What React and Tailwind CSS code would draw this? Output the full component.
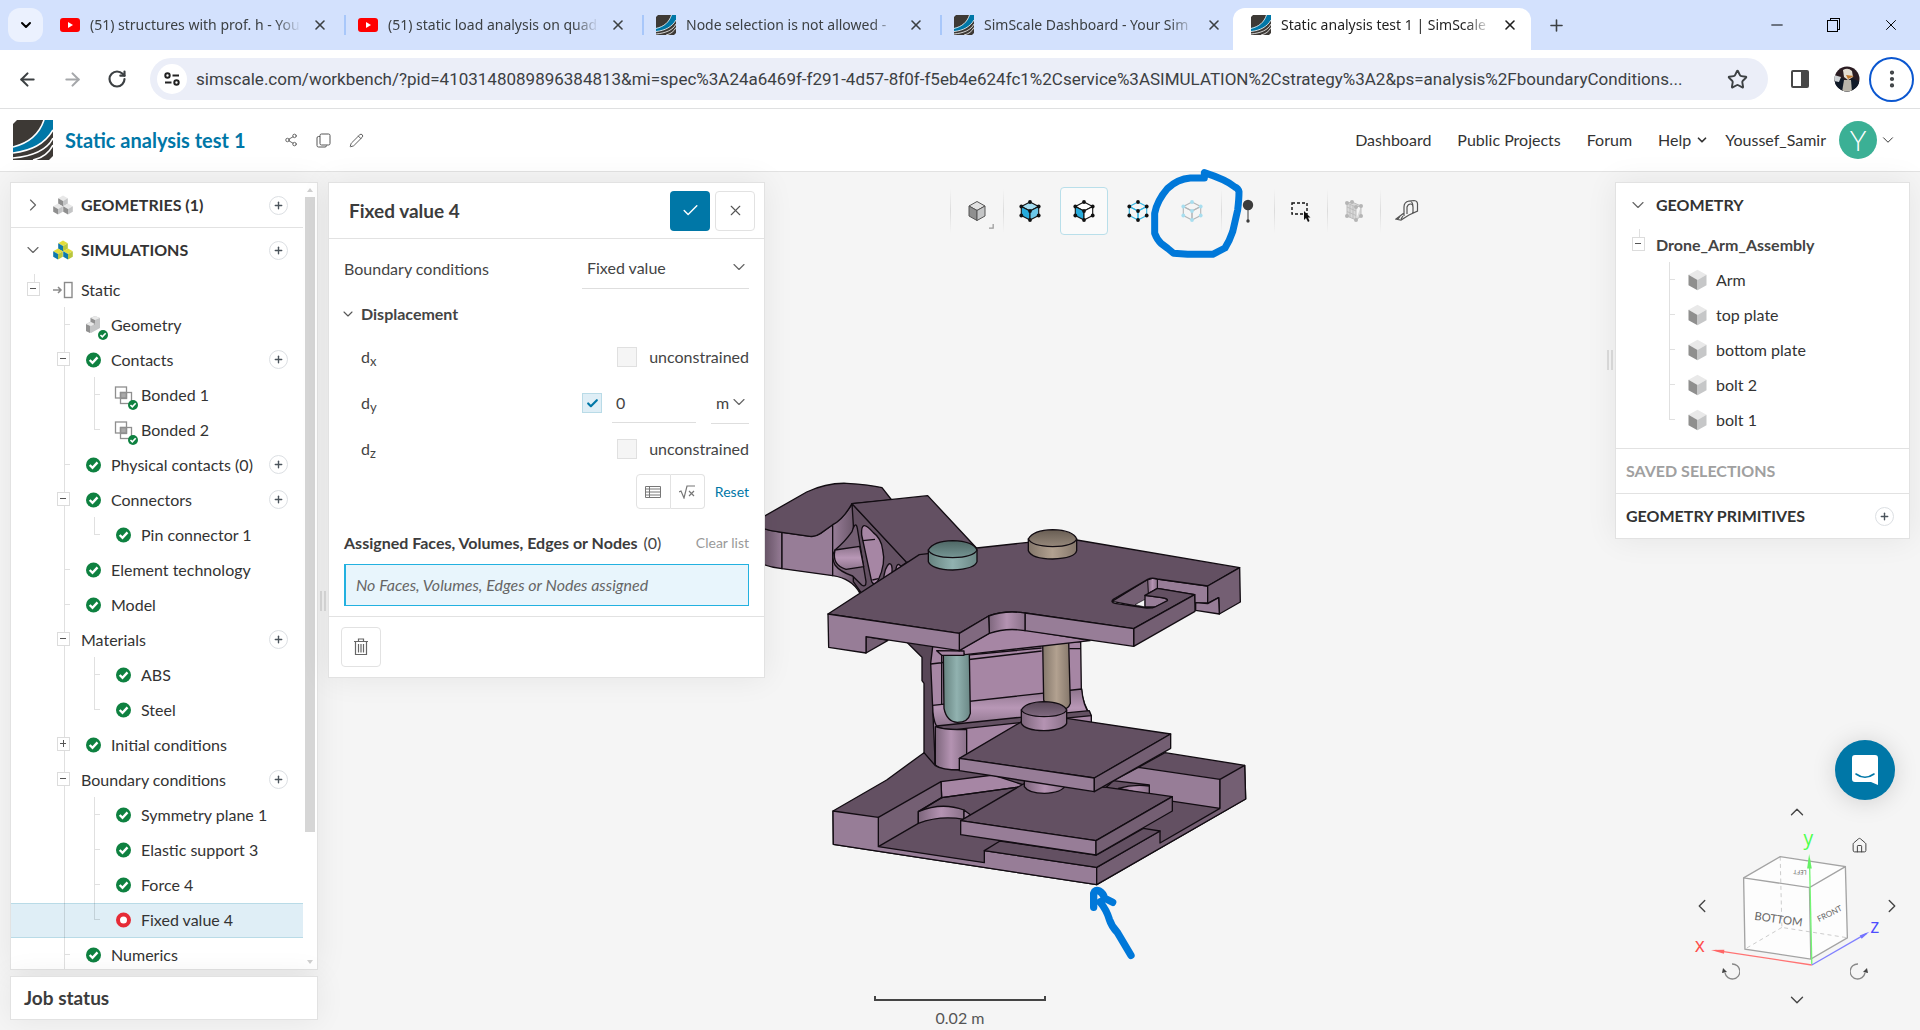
import React, { useState } from 'react';
import {
  ArrowLeft,
  ArrowRight,
  Check,
  ChevronDown,
  ChevronLeft,
  ChevronRight,
  ChevronUp,
  EllipsisVertical,
  House,
  Minus,
  Pencil,
  Plus,
  RotateCw,
  Share2,
  Star,
  X,
} from 'lucide-react';

const TABS = [
  { icon: 'youtube', title: '(51) structures with prof. h - You' },
  { icon: 'youtube', title: '(51) static load analysis on quad' },
  { icon: 'simscale', title: 'Node selection is not allowed -' },
  { icon: 'simscale', title: 'SimScale Dashboard - Your Sim' },
  { icon: 'simscale', title: 'Static analysis test 1 | SimScale', active: true },
];

const URL =
  'simscale.com/workbench/?pid=4103148089896384813&mi=spec%3A24a6469f-f291-4d57-8f0f-f5eb4e624fc1%2Cservice%3ASIMULATION%2Cstrategy%3A2&ps=analysis%2FboundaryConditions...';

// guides: one entry per 30px column in front of the item
const TREE = [
  { label: 'Static', guides: ['root'], icon: 'static' },
  { label: 'Geometry', guides: ['none', 'tee'], icon: 'geometry' },
  { label: 'Contacts', guides: ['none', 'minus'], icon: 'ok', add: true },
  { label: 'Bonded 1', guides: ['none', 'line', 'tee'], icon: 'bonded' },
  { label: 'Bonded 2', guides: ['none', 'line', 'end'], icon: 'bonded' },
  { label: 'Physical contacts (0)', guides: ['none', 'tee'], icon: 'ok', add: true },
  { label: 'Connectors', guides: ['none', 'minus'], icon: 'ok', add: true },
  { label: 'Pin connector 1', guides: ['none', 'line', 'end'], icon: 'ok' },
  { label: 'Element technology', guides: ['none', 'tee'], icon: 'ok' },
  { label: 'Model', guides: ['none', 'tee'], icon: 'ok' },
  { label: 'Materials', guides: ['none', 'minus'], add: true },
  { label: 'ABS', guides: ['none', 'line', 'tee'], icon: 'ok' },
  { label: 'Steel', guides: ['none', 'line', 'end'], icon: 'ok' },
  { label: 'Initial conditions', guides: ['none', 'plus'], icon: 'ok' },
  { label: 'Boundary conditions', guides: ['none', 'minus'], add: true },
  { label: 'Symmetry plane 1', guides: ['none', 'line', 'tee'], icon: 'ok' },
  { label: 'Elastic support 3', guides: ['none', 'line', 'tee'], icon: 'ok' },
  { label: 'Force 4', guides: ['none', 'line', 'tee'], icon: 'ok' },
  { label: 'Fixed value 4', guides: ['none', 'line', 'end'], icon: 'open', selected: true },
  { label: 'Numerics', guides: ['none', 'tee'], icon: 'ok' },
];

const PARTS = ['Arm', 'top plate', 'bottom plate', 'bolt 2', 'bolt 1'];

function SimScaleLogo({ className }) {
  return (
    <svg viewBox="0 0 40 40" className={className} aria-hidden="true">
      <path d="M4 0 H40 V36 L36 40 H0 V4 Z" fill="#3d3935" />
      <path d="M31 0 H40 V10 C32 24 18 31 0 33 V26 C16 23 26 15 31 0 Z" fill="#0077a7" />
      <path d="M31 0 C26 15 16 23 0 27" fill="none" stroke="#fff" strokeWidth="1.6" />
      <path d="M40 10 C32 24 18 31 0 33" fill="none" stroke="#fff" strokeWidth="1.6" />
      <path d="M40 18 C34 30 20 36 0 38" fill="none" stroke="#fff" strokeWidth="1.6" />
      <path d="M40 25 C36 33 29 38 20 40" fill="none" stroke="#fff" strokeWidth="1.6" />
    </svg>
  );
}

function YouTubeIcon() {
  return (
    <svg viewBox="0 0 20 20" className="h-5 w-5 shrink-0" aria-hidden="true">
      <rect y="3" width="20" height="14" rx="3" fill="#f00" />
      <path d="M8 7 L13 10 L8 13 Z" fill="#fff" />
    </svg>
  );
}

function Cube({ x, y, r, top, left, right }) {
  const h = r * 1.14;
  return (
    <g transform={`translate(${x} ${y})`}>
      <path d={`M0 ${-h} L${r} ${-h / 2} L0 0 L${-r} ${-h / 2} Z`} fill={top} />
      <path d={`M${-r} ${-h / 2} L0 0 V${h} L${-r} ${h / 2} Z`} fill={left} />
      <path d={`M${r} ${-h / 2} L0 0 V${h} L${r} ${h / 2} Z`} fill={right} />
    </g>
  );
}

function CubeStack({ top, left, right }) {
  return (
    <svg viewBox="0 0 20 20" className="h-5 w-5" aria-hidden="true">
      <Cube x={10} y={6} r={4.8} top={top} left={left} right={right} />
      <Cube x={5} y={14} r={4.8} top={top} left={left} right={right} />
      <Cube x={15} y={14} r={4.8} top={top} left={left} right={right} />
    </svg>
  );
}

function CheckBadge({ x, y, r }) {
  return (
    <g transform={`translate(${x} ${y}) scale(${r / 7.5})`}>
      <circle r="7.5" fill="#0e8140" stroke="none" />
      <path d="M-3.8 0 L-1 2.8 L4 -2.6" fill="none" stroke="#fff" strokeWidth="2.4" />
    </g>
  );
}

function ItemIcon({ type }) {
  return (
    <svg viewBox="0 0 30 30" className="h-[30px] w-[30px] shrink-0 overflow-visible" aria-hidden="true">
      {type === 'ok' && <CheckBadge x={15.5} y={15} r={7.5} />}
      {type === 'open' && <circle cx="15.5" cy="15" r="5.5" fill="#fff" stroke="#e62b36" strokeWidth="4" />}
      {type === 'static' && (
        <g fill="none" stroke="#8a8a8a">
          <rect x="16.5" y="7.5" width="7.5" height="15" strokeWidth="1.4" />
          <path d="M5 15 H13 M10 12 L13 15 L10 18" strokeWidth="1.5" />
        </g>
      )}
      {type === 'geometry' && (
        <g>
          <path d="M8 14 L12 12 V8 L17 6 L22 8 V18 L13 23 L8 21 Z" fill="#c4c5c6" />
          <path d="M8 14 L12 16 V23 L8 21 Z M13 8 L17 10 V15 L13 13 Z" fill="#919191" />
          <path d="M8 14 L13 12 L17 14 L13 16 Z M13 8 L17 6 L22 8 L17 10 Z" fill="#e9e9e9" />
          <CheckBadge x={25} y={25} r={5} />
        </g>
      )}
      {type === 'bonded' && (
        <g fill="none" stroke="#8f8f8f" strokeWidth="1.3">
          <rect x="12.5" y="12.5" width="6" height="6" fill="#a9a9a9" />
          <rect x="7.5" y="7" width="11" height="11" />
          <rect x="12.5" y="12.5" width="11" height="11" />
          <CheckBadge x={25} y={25} r={5} />
        </g>
      )}
    </svg>
  );
}

function Guide({ type }) {
  const boxed = type === 'minus' || type === 'plus' || type === 'root';
  return (
    <svg viewBox="0 0 30 35" className="h-[35px] w-[30px] shrink-0" aria-hidden="true">
      <g fill="none" stroke="#000" strokeOpacity="0.12" shapeRendering="crispEdges">
        {(type === 'line' || type === 'tee' || type === 'minus' || type === 'plus') && <path d="M16.5 0 V35" />}
        {type === 'end' && <path d="M16.5 0 V18" />}
        {type === 'root' && <path d="M16.5 2 V12" />}
        {(type === 'tee' || type === 'end') && <path d="M17 17.5 H22" />}
      </g>
      {boxed && (
        <g shapeRendering="crispEdges">
          <rect x="9.5" y="10.5" width="12" height="13" fill="#fff" stroke="#dcdcdc" />
          <path d="M12 16.5 H18" stroke="#555" />
          {type === 'plus' && <path d="M15.5 13 V20" stroke="#555" />}
        </g>
      )}
    </svg>
  );
}

function AddButton({ label }) {
  return (
    <button
      aria-label={`Add ${label}`}
      className="ml-auto flex h-[19px] w-[19px] shrink-0 items-center justify-center rounded-full border border-[#dcdfe3] bg-white text-[#4b545c]"
    >
      <Plus size={11} strokeWidth={3} />
    </button>
  );
}

function TreeRow({ item }) {
  return (
    <li
      className={`flex h-[35px] items-center pr-[15px] pb-[2px] pl-[7px] ${
        item.selected ? 'bg-[#dfeef6] shadow-[inset_0_1px_0_#b9dbe7,inset_0_-1px_0_#b9dbe7]' : ''
      }`}
    >
      {item.guides.map((g, i) => (
        <Guide key={i} type={g} />
      ))}
      {item.icon && <ItemIcon type={item.icon} />}
      <span className="pl-[3px]">{item.label}</span>
      {item.add && <AddButton label={item.label} />}
    </li>
  );
}

function SectionHeader({ title, icon, open }) {
  const Chevron = open ? ChevronDown : ChevronRight;
  return (
    <div className="flex h-11 items-center pr-[15px] pl-[7px]">
      <button aria-label={title} className="flex w-[30px] justify-center text-[#666]">
        <Chevron size={20} strokeWidth={1.4} />
      </button>
      <span className="flex w-[30px] justify-center">{icon}</span>
      <h2 className="pl-[3px] font-bold">{title}</h2>
      <AddButton label={title} />
    </div>
  );
}

function BrowserTabs() {
  return (
    <div className="flex h-[50px] bg-[#d3e1fd] pl-2 text-[#3c4043]">
      <button aria-label="Search tabs" className="mt-2 mr-2 flex h-[34px] w-[35px] shrink-0 items-center justify-center rounded-xl bg-[#ebf1fe] text-black">
        <ChevronDown size={16} strokeWidth={3} />
      </button>
      <div className="flex min-w-0">
        {TABS.map((tab, i) => (
          <div
            key={tab.title}
            className={`mt-2 flex h-[42px] w-[298px] min-w-0 items-center pb-2 ${
              tab.active ? 'ml-[-10px] rounded-t-xl bg-white pr-[13px] pl-[18px] text-[#1f1f1f]' : 'pr-4 pl-[9px]'
            }`}
          >
            {tab.icon === 'youtube' ? <YouTubeIcon /> : <SimScaleLogo className="h-5 w-5 shrink-0" />}
            <span className="ml-[10px] flex-1 whitespace-nowrap [mask-image:linear-gradient(to_right,#000_88%,transparent)]">
              {tab.title}
            </span>
            <button aria-label={`Close ${tab.title}`} className="ml-[11px] shrink-0">
              <X size={16} strokeWidth={2.4} />
            </button>
            {i < 3 && <span className="ml-4 -mr-[13px] h-5 w-[2px] shrink-0 bg-[#a8c7fa]" />}
            {i === 3 && <span className="w-[5px] shrink-0" />}
          </div>
        ))}
        <button aria-label="New tab" className="ml-4 shrink-0">
          <Plus size={19} strokeWidth={2} />
        </button>
      </div>
      <div className="ml-auto flex items-center gap-10 pr-5 text-black">
        <button aria-label="Minimize">
          <Minus size={18} strokeWidth={1.3} />
        </button>
        <button aria-label="Restore">
          <svg viewBox="0 0 16 16" className="h-4 w-4" fill="none" stroke="currentColor" shapeRendering="crispEdges">
            <path d="M1.5 3.5 H11.5 V14.5 H1.5 Z M4 3 V1.5 H13.5 V12.5 H12" />
          </svg>
        </button>
        <button aria-label="Close window">
          <X size={18} strokeWidth={1.3} />
        </button>
      </div>
    </div>
  );
}

function AddressBar() {
  return (
    <div className="flex h-[59px] items-center border-b border-[#dfe0e1] bg-white px-[17px] pr-[6px] text-[#3c4043]">
      <button aria-label="Back">
        <ArrowLeft size={21} strokeWidth={2.4} />
      </button>
      <button aria-label="Forward" className="ml-6 text-[#a5a7aa]">
        <ArrowRight size={21} strokeWidth={2.4} />
      </button>
      <button aria-label="Reload" className="ml-6">
        <RotateCw size={20} strokeWidth={2.6} />
      </button>
      <div className="ml-[23px] flex h-[42px] min-w-0 flex-1 items-center rounded-full bg-[#ebeef8] pl-[7px] pr-5">
        <button aria-label="Site settings" className="flex h-[30px] w-[30px] shrink-0 items-center justify-center rounded-full bg-white">
          <svg viewBox="0 0 16 16" className="h-4 w-4" fill="none" stroke="#222" strokeWidth="2">
            <circle cx="3.5" cy="4.5" r="2.2" />
            <path d="M8.5 4.5 H15 M1 11.5 H7.5" />
            <circle cx="12.5" cy="11.5" r="2.2" />
          </svg>
        </button>
        <input
          aria-label="Address"
          defaultValue={URL}
          className="ml-[9px] min-w-0 flex-1 bg-transparent font-['Roboto',sans-serif] text-[17px] outline-none"
        />
        <button aria-label="Bookmark" className="shrink-0">
          <Star size={21} strokeWidth={2.2} />
        </button>
      </div>
      <button aria-label="Side panel" className="ml-[22px]">
        <svg viewBox="0 0 20 20" className="h-5 w-5">
          <rect x="1" y="1" width="18" height="18" rx="2" fill="#474747" />
          <rect x="3" y="3" width="8" height="14" fill="#fff" />
        </svg>
      </button>
      <button aria-label="Profile" className="ml-6">
        <svg viewBox="0 0 26 26" className="h-[26px] w-[26px]">
          <clipPath id="face">
            <circle cx="13" cy="13" r="12.5" />
          </clipPath>
          <g clipPath="url(#face)">
            <rect width="26" height="26" fill="#2b1c22" />
            <path d="M0 14 L9 12 L13 20 L18 12 L26 16 V26 H0 Z" fill="#101a28" />
            <path d="M0 9 L7 11 L5 16 L0 15 Z" fill="#cfd3d6" />
            <path d="M9 4 Q14 1 18 5 L19 11 L14 14 L10 11 Z" fill="#e4ddd2" />
            <path d="M12 9 L20 10 L14 13 Z" fill="#c0782e" />
            <path d="M10 14 L17 14 L18 26 L8 26 Z" fill="#b9b5aa" />
          </g>
        </svg>
      </button>
      <button aria-label="Menu" className="ml-[9px] flex h-[45px] w-[45px] items-center justify-center rounded-full border-2 border-[#0b57d0]">
        <EllipsisVertical size={22} strokeWidth={2.6} />
      </button>
    </div>
  );
}

function AppHeader() {
  return (
    <header className="flex h-[63px] items-center border-b border-[#e2e2e2] bg-white pl-[13px] pr-[23px] text-[#333]">
      <SimScaleLogo className="h-10 w-10" />
      <h1 className="ml-3 text-xl font-bold text-[#0077a7]">Static analysis test 1</h1>
      <div className="ml-[38px] flex items-center gap-[18px] text-[#555]">
        <button aria-label="Share">
          <Share2 size={14} strokeWidth={1.5} />
        </button>
        <button aria-label="Duplicate">
          <svg viewBox="0 0 15 15" className="h-[15px] w-[15px]" fill="none" stroke="currentColor">
            <rect x="4" y="1" width="10" height="11" rx="1.5" />
            <path d="M4 3.5 H2.5 Q1 3.5 1 5 V12.5 Q1 14 2.5 14 H9 Q10.5 14 10.5 12.5" />
          </svg>
        </button>
        <button aria-label="Rename">
          <Pencil size={15} strokeWidth={1.5} />
        </button>
      </div>
      <nav className="ml-auto flex items-center gap-[26px]">
        <a href="#dashboard">Dashboard</a>
        <a href="#projects">Public Projects</a>
        <a href="#forum">Forum</a>
        <button className="flex items-center gap-1">
          Help <ChevronDown size={14} strokeWidth={3} />
        </button>
      </nav>
      <button className="ml-4 flex items-center">
        Youssef_Samir
        <span className="ml-[13px] flex h-[38px] w-[38px] items-center justify-center rounded-full bg-[#3bb095] text-[28px] font-light text-white">
          Y
        </span>
        <ChevronDown size={18} strokeWidth={1.3} className="ml-[2px]" />
      </button>
    </header>
  );
}

function SimulationTree() {
  return (
    <section className="flex min-h-0 flex-1 overflow-hidden border border-[#e2e2e2] bg-white shadow-[0_0_30px_rgba(0,0,0,0.07)]">
      <div className="min-w-0 flex-1">
        <div className="border-b border-[#e2e2e2]">
          <SectionHeader title="GEOMETRIES (1)" icon={<CubeStack top="#e8e8e8" left="#8f8f8f" right="#c4c5c6" />} />
        </div>
        <SectionHeader title="SIMULATIONS" open icon={<CubeStack top="#e3dd3c" left="#0f79ab" right="#b9c63c" />} />
        <ul className="pt-px">
          {TREE.map((item) => (
            <TreeRow key={item.label} item={item} />
          ))}
        </ul>
      </div>
      <div className="flex w-[14px] flex-col items-center" aria-hidden="true">
        <svg viewBox="0 0 10 14" className="h-[14px] w-[10px] shrink-0">
          <path d="M2 9 L5 5 L8 9 Z" fill="#cfcfcf" />
        </svg>
        <div className="h-[635px] w-[10px] bg-[#d6d6d6]" />
        <svg viewBox="0 0 10 14" className="mt-auto h-[14px] w-[10px] shrink-0">
          <path d="M2 5 L5 9 L8 5 Z" fill="#cfcfcf" />
        </svg>
      </div>
    </section>
  );
}

function TickBox({ checked, onChange, label, children }) {
  return (
    <label className="flex items-center gap-3">
      <span className="grid">
        <input
          type="checkbox"
          aria-label={label}
          checked={checked}
          onChange={onChange}
          className="col-start-1 row-start-1 h-5 w-5 appearance-none border border-[#e0e0e0] bg-[#f5f5f5] checked:border-[#b9dbe7] checked:bg-[#dfeef6]"
        />
        {checked && (
          <Check size={13} strokeWidth={4} className="pointer-events-none col-start-1 row-start-1 self-center justify-self-center text-[#0077a7]" />
        )}
      </span>
      {children}
    </label>
  );
}

function Axis({ name }) {
  return (
    <span className="pl-[17px]">
      d<sub className="text-[13px]">{name}</sub>
    </span>
  );
}

function Dropdown({ label, value, className }) {
  return (
    <div className={`relative border-b border-[#dedede] ${className}`}>
      <select aria-label={label} className="h-10 w-full appearance-none bg-transparent pl-[5px] outline-none">
        <option>{value}</option>
      </select>
      <ChevronDown size={20} strokeWidth={1.4} className="pointer-events-none absolute top-[9px] right-0 text-[#666]" />
    </div>
  );
}

function BoundaryForm() {
  const [fixed, setFixed] = useState({ x: false, y: true, z: false });
  const toggle = (axis) => setFixed({ ...fixed, [axis]: !fixed[axis] });

  return (
    <form className="w-[437px] shrink-0 self-start border border-[#e2e2e2] bg-white text-[#444] shadow-[0_0_30px_rgba(0,0,0,0.07)]">
      <div className="flex h-14 items-center gap-[5px] border-b border-[#e2e2e2] pl-5 pr-[9px]">
        <h2 className="flex-1 text-[19px] font-bold text-[#3c3c3c]">Fixed value 4</h2>
        <button type="button" aria-label="Apply" className="flex h-10 w-10 items-center justify-center rounded bg-[#0077a7] text-white">
          <Check size={19} strokeWidth={1.8} />
        </button>
        <button type="button" aria-label="Cancel" className="flex h-10 w-10 items-center justify-center rounded border border-[#e2e2e2] text-[#555]">
          <X size={17} strokeWidth={1.6} />
        </button>
      </div>

      <div className="px-[15px] pt-[9px] pb-[10px]">
        <div className="flex items-center justify-between">
          <span>Boundary conditions</span>
          <Dropdown label="Boundary conditions" value="Fixed value" className="w-[167px]" />
        </div>

        <h3 className="mt-1 flex h-[41px] items-center gap-[5px] font-bold">
          <ChevronDown size={16} strokeWidth={1.6} className="-ml-1 text-[#555]" />
          Displacement
        </h3>

        <div className="flex h-[46px] items-center justify-between">
          <Axis name="x" />
          <TickBox checked={fixed.x} onChange={() => toggle('x')}>
            unconstrained
          </TickBox>
        </div>
        <div className="flex h-[46px] items-center">
          <Axis name="y" />
          <div className="ml-auto flex items-center gap-[10px]">
            <TickBox checked={fixed.y} onChange={() => toggle('y')} label="Constrain y" />
            <input
              aria-label="Displacement y"
              defaultValue="0"
              className="h-10 w-[84px] border-b border-[#dedede] pl-1 outline-none"
            />
          </div>
          <Dropdown label="Unit" value="m" className="ml-[15px] w-[38px]" />
        </div>
        <div className="flex h-[46px] items-center justify-between">
          <Axis name="z" />
          <TickBox checked={fixed.z} onChange={() => toggle('z')}>
            unconstrained
          </TickBox>
        </div>

        <div className="mt-[2px] flex items-center justify-end text-sm">
          <button type="button" aria-label="Table input" className="flex h-[35px] w-[35px] items-center justify-center rounded-l border border-[#e2e2e2]">
            <svg viewBox="0 0 16 12" className="h-3 w-4" fill="none" stroke="#777">
              <path d="M0.5 0.5 H15.5 V11.5 H0.5 Z M0.5 3 H15.5 M0.5 6 H15.5 M0.5 9 H15.5 M4.5 0.5 V11.5" />
            </svg>
          </button>
          <button type="button" aria-label="Formula input" className="flex h-[35px] w-[34px] items-center justify-center rounded-r border border-l-0 border-[#e2e2e2]">
            <svg viewBox="0 0 16 14" className="h-[14px] w-4" fill="none" stroke="#777" strokeWidth="1.2">
              <path d="M0 7 L2 6 L5 13 L8 1 H16 M10 6 L15 11 M15 6 L10 11" />
            </svg>
          </button>
          <button type="button" className="ml-[10px] text-[#0077a7]">Reset</button>
        </div>

        <div className="mt-[22px] flex h-6 items-center">
          <strong className="text-[#3c3c3c]">Assigned Faces, Volumes, Edges or Nodes</strong>
          <span className="ml-[6px]">(0)</span>
          <button type="button" className="ml-auto text-sm text-[#999]">Clear list</button>
        </div>
        <div className="mt-[9px] flex h-[42px] items-center border border-l-2 border-[#22b1e0] bg-[#e8f5fc] pl-[10px] text-[#666] italic">
          No Faces, Volumes, Edges or Nodes assigned
        </div>
      </div>

      <div className="border-t border-[#e2e2e2] px-3 py-[10px]">
        <button type="button" aria-label="Delete" className="flex h-10 w-10 items-center justify-center rounded border border-[#e2e2e2]">
          <svg viewBox="0 0 16 18" className="h-[18px] w-4" fill="none" stroke="#666" strokeWidth="1.2">
            <path d="M1 3.5 H15 M5.5 3 V1 H10.5 V3 M2.5 4 V16.5 H13.5 V4 M5.5 6 V14.5 M8 6 V14.5 M10.5 6 V14.5" />
          </svg>
        </button>
      </div>
    </form>
  );
}

const HEX = [
  [12, 3],
  [20.7, 7.5],
  [20.7, 16.5],
  [12, 21],
  [3.3, 16.5],
  [3.3, 7.5],
  [12, 12],
];

function SelectionCube({ top = 'none', left = 'none', right = 'none', edge, dot }) {
  return (
    <svg viewBox="0 0 24 24" className="h-6 w-6" aria-hidden="true">
      <g stroke={edge} strokeWidth="1.1" strokeLinejoin="round">
        <path d="M12 3 L20.7 7.5 L12 12 L3.3 7.5 Z" fill={top} />
        <path d="M3.3 7.5 L12 12 V21 L3.3 16.5 Z" fill={left} />
        <path d="M20.7 7.5 L12 12 V21 L20.7 16.5 Z" fill={right} />
      </g>
      {dot && HEX.map(([x, y]) => <circle key={`${x}-${y}`} cx={x} cy={y} r="1.9" fill={dot} />)}
    </svg>
  );
}

function ToolButton({ label, active, children }) {
  return (
    <button
      aria-label={label}
      className={`relative flex h-12 w-12 items-center justify-center rounded ${
        active ? 'border border-[#b9dfea] bg-[#fafafa]' : ''
      }`}
    >
      {children}
    </button>
  );
}

function Separator() {
  return <span className="h-11 w-px bg-linear-to-b from-transparent via-[#dcdcdc] to-transparent" />;
}

function ViewerToolbar() {
  return (
    <div className="flex items-center gap-[2px]">
      <Separator />
      <ToolButton label="Render mode">
        <svg viewBox="0 0 24 24" className="h-6 w-6" stroke="#555" strokeLinejoin="round">
          <path d="M12 2.500 L20 7 L12 11.500 L4 7 Z" fill="#e2e2e2" />
          <path d="M4 7 L12 11.500 V21.500 L4 17 Z" fill="#8f8f8f" />
          <path d="M20 7 L12 11.500 V21.500 L20 17 Z" fill="#c4c5c6" />
        </svg>
        <svg viewBox="0 0 6 6" className="absolute right-[7px] bottom-[6px] h-[5px] w-[5px]" fill="none" stroke="#999" strokeWidth="1.5">
          <path d="M5 0 V5 H0" />
        </svg>
      </ToolButton>
      <Separator />
      <div className="flex gap-[6px] pr-[3px]">
        <ToolButton label="Select volumes">
          <SelectionCube top="#a5def2" left="#27abdc" right="#6cc8ea" edge="#111" dot="#111" />
        </ToolButton>
        <ToolButton label="Select faces" active>
          <SelectionCube left="#27abdc" top="#fff" right="#fff" edge="#111" dot="#111" />
        </ToolButton>
        <ToolButton label="Select edges">
          <SelectionCube edge="#31b3e0" dot="#111" />
        </ToolButton>
        <ToolButton label="Select nodes">
          <SelectionCube edge="#b3b6b8" dot="#a8deef" />
          <svg viewBox="0 0 276 270" className="pointer-events-none absolute -top-[18px] -left-[17px] z-10 h-[90px] w-[92px]" fill="none" stroke="#0078d9" strokeWidth="21" strokeLinejoin="round" strokeLinecap="round">
            <path d="M158 27 H118 Q80 30 50 58 Q18 95 11 133 V193 Q18 212 30 223 L50 238 L68 253 L110 256 H185 L222 237 Q236 215 245 188 L260 123 Q264 90 264 68 Q262 58 250 53 Q225 32 160 11 V27" />
          </svg>
        </ToolButton>
      </div>
      <Separator />
      <ToolButton label="Probe point">
        <svg viewBox="0 0 24 24" className="h-6 w-6">
          <circle cx="12" cy="6" r="5.2" fill="#3c3c3c" />
          <path d="M12 6 V22" stroke="#3c3c3c" />
          <circle cx="12" cy="22" r="1.7" fill="#3c3c3c" />
        </svg>
      </ToolButton>
      <Separator />
      <ToolButton label="Box select">
        <svg viewBox="0 0 24 24" className="h-6 w-6 overflow-visible">
          <rect x="3" y="4" width="15" height="11" fill="none" stroke="#111" strokeWidth="1.4" strokeDasharray="3 2" />
          <path d="M15 12 L15 21 L17 19 L19 23 L20.5 22 L19 18.5 H21.5 Z" fill="#111" />
        </svg>
      </ToolButton>
      <Separator />
      <ToolButton label="Mesh clip">
        <svg viewBox="0 0 24 24" className="h-6 w-6" fill="#d9d9d9" stroke="#bdbdbd">
          <path d="M5 4 L14 8 V21 L5 17 Z M5 8 L14 12 M5 12.500 L14 16.500 M8 5.500 V18.500 M11 7 V20 M5 4 L10 3 L19 7 L14 8 M19 7 V17 L14 21" />
          <g fill="#b5b5b5" stroke="none">
            <circle cx="5" cy="4" r="2" />
            <circle cx="14" cy="8" r="2" />
            <circle cx="14" cy="21" r="2" />
            <circle cx="5" cy="17" r="2" />
            <circle cx="19" cy="7" r="2" />
            <circle cx="19" cy="17" r="2" />
            <circle cx="10" cy="3" r="2" />
          </g>
        </svg>
      </ToolButton>
      <Separator />
      <ToolButton label="Measure">
        <svg viewBox="0 0 24 24" className="h-6 w-6" fill="none" stroke="#555" strokeWidth="1.2">
          <path d="M9 17 V8 Q9 3 14 2 L19 1.500 Q23 2 22.500 6 V12 L14 16 L6 21 L1 20 L9 14 Z M12 15 V8 Q13 5 15.500 5 Q18 5 18 8 V14 M14 2 Q18 2 18 8 M3 20 L5 17.500 M6 20 L8 17" />
        </svg>
      </ToolButton>
    </div>
  );
}

// drone arm assembly, drawn at three units per pixel
function AssemblyModel() {
  const top = '#635062';
  const front = '#977d97';
  const side = '#745f73';
  const light = '#a686a4';

  return (
    <svg
      viewBox="0 0 1500 1680"
      className="pointer-events-none absolute top-[298px] left-[760px] h-[560px] w-[500px]"
      stroke="#120c12"
      strokeWidth="4"
      strokeLinejoin="round"
      role="img"
      aria-label="Drone arm assembly"
    >
      <defs>
        <linearGradient id="cyl">
          <stop offset="0" stopColor="#7d667c" />
          <stop offset="0.5" stopColor="#b493b2" />
          <stop offset="1" stopColor="#8a7189" />
        </linearGradient>
        <linearGradient id="curve">
          <stop offset="0" stopColor="#5f4d5e" />
          <stop offset="1" stopColor={front} />
        </linearGradient>
        <linearGradient id="curveBack">
          <stop offset="0" stopColor={front} />
          <stop offset="1" stopColor="#5f4d5e" />
        </linearGradient>
        <linearGradient id="teal">
          <stop offset="0" stopColor="#66827f" />
          <stop offset="0.5" stopColor="#91b2b0" />
          <stop offset="1" stopColor="#6b8886" />
        </linearGradient>
        <linearGradient id="tealTop" x2="0" y2="1">
          <stop offset="0" stopColor="#4d6664" />
          <stop offset="1" stopColor="#769694" />
        </linearGradient>
        <linearGradient id="tan">
          <stop offset="0" stopColor="#83766a" />
          <stop offset="0.5" stopColor="#b2a190" />
          <stop offset="1" stopColor="#85776b" />
        </linearGradient>
        <linearGradient id="tanTop" x2="0" y2="1">
          <stop offset="0" stopColor="#685d53" />
          <stop offset="1" stopColor="#96887b" />
        </linearGradient>
        <linearGradient id="head" x2="0" y2="1">
          <stop offset="0" stopColor="#594858" />
          <stop offset="1" stopColor="#806a80" />
        </linearGradient>
        <linearGradient id="band" x2="0" y2="1">
          <stop offset="0" stopColor="#8d748c" />
          <stop offset="0.5" stopColor="#b897b6" />
          <stop offset="1" stopColor="#8d748c" />
        </linearGradient>
      </defs>

      {/* arm */}
      <path d="M0 172 Q30 184 66 187 V296 Q30 292 0 280 Z" fill="url(#curve)" />
      <path d="M66 187 L150 199 Q168 200 182 190 L218 164 V317 L66 296 Z" fill={front} />
      <path d="M218 164 Q255 140 276 101 L290 180 L300 370 Q275 325 218 317 Z" fill="url(#curveBack)" />
      <path d="M0 146 L140 66 Q200 38 260 40 Q330 44 366 53 L395 90 L276 101 Q248 150 218 164 L182 190 Q165 202 150 199 L66 187 Q30 184 0 172 Z" fill={top} />
      <path d="M276 101 L440 277 L345 345 L305 370 L280 335 V165 Z" fill={top} />
      <path d="M276 185 Q287 150 292 175 L318 335 Q318 353 305 345 Q290 330 278 318 Q240 305 225 285 Q212 260 225 240 Q255 215 276 185 Z" fill={side} />
      <path d="M225 240 L299 229 L311 290 L258 298 Q215 285 225 240 Z" fill="url(#band)" />
      <path d="M312 167 Q303 170 305 195 L335 335 Q343 350 355 330 Q378 280 368 240 Q364 205 340 188 Q320 165 312 167 Z" fill={light} />
      <path d="M308 212 L345 208 M337 330 L355 326" fill="none" />
      <path d="M370 333 Q374 290 388 281 Q398 280 396 308 Z M408 302 Q408 284 416 283 L425 290 Z" fill={light} />
      <path d="M276 101 L503 77 L655 240 L440 277 Z" fill={top} />

      {/* column behind the bolts */}
      <path d="M440 516 L486 562 V632 L492 640 V850 L525 888 L530 520 Z" fill="#584757" />
      <path d="M518 530 L962 515 L964 655 Q968 705 994 738 V770 L600 870 L526 888 L512 580 Z" fill={light} />
      <path d="M518 706 L965 657 Q970 710 988 730 L780 750 L530 770 Q518 748 518 706 Z" fill="url(#band)" />
      <path d="M512 582 L845 543 M845 534 L615 556 M928 536 H962 M545 550 V705" fill="none" />
      <path d="M530 768 L780 742 L988 722 L994 737 L780 758 L590 778 Q545 780 530 768 Z" fill={top} />
      <path d="M526 770 Q560 782 620 778 V900 H560 Q535 895 526 885 Z" fill="url(#cyl)" />

      {/* bolt shafts */}
      <path d="M550 550 H628 L631 730 Q625 757 592 757 Q560 755 552 715 Z" fill="url(#teal)" />
      <path d="M848 515 H926 L931 700 Q925 722 890 722 Q860 718 851 690 Z" fill="url(#tan)" />

      {/* upper plate */}
      <path d="M600 540 L690 488 Q760 465 810 482 L990 512 L615 554 Z" fill={light} />
      <path d="M530 542 L612 543 V556 H545 Z" fill={light} />
      <path d="M1056 394 L1163 328 L1192 325 L1304 345 V374 L1222 400 L1160 414 Z" fill={side} />
      <path d="M1192 327 L1343 348 V399 L1304 398 V374 L1192 355 Z" fill={front} />
      <path d="M1163 330 Q1178 322 1192 327 V355 L1165 370 Z" fill="url(#cyl)" strokeWidth="3" />
      <path d="M1125 404 L1155 388 V411 Z" fill="#f5f5f5" strokeWidth="2" />
      <path d="M1155 376 L1205 383 Q1228 387 1222 394 L1185 411 L1155 411 Z" fill={front} />
      <path
        d="M204 432 L478 254 L650 234 L805 217 L950 210 L1439 293 L1343 348 L1192 327 Q1175 322 1163 328 L1060 388 Q1050 397 1065 400 L1160 414 Q1175 416 1185 411 L1222 392 Q1225 386 1205 383 L1155 376 L1192 355 L1304 374 L1121 476 L795 429 Q735 420 686 438 L598 490 Z"
        fill={top}
      />
      <path d="M1439 293 L1441 396 L1378 432 L1376 383 L1343 400 V348 Z" fill={side} />
      <path d="M1307 398 L1343 401 L1376 383 L1378 432 L1307 421 Z" fill={front} />
      <path d="M1304 374 L1305 424 L1121 529 V476 Z" fill={side} />
      <path d="M795 429 L1121 476 V529 L795 482 Z" fill={front} />
      <path d="M686 438 Q735 420 795 429 V482 Q740 472 688 490 Z" fill="url(#cyl)" />
      <path d="M598 490 L686 438 L688 490 L598 542 Z" fill="#80697f" />
      <path d="M318 500 L384 511 L318 549 Z" fill={side} />
      <path d="M204 432 L598 490 V542 L318 500 V549 L206 532 Z" fill={front} />

      {/* bolt heads */}
      <path d="M505 240 V275 Q515 298 578 300 Q645 297 651 275 V240 Z" fill="url(#teal)" />
      <path d="M505 240 Q520 213 578 212 Q640 214 651 240 Q640 262 578 263 Q515 262 505 240 Z" fill="url(#tealTop)" />
      <path d="M805 207 V242 Q815 266 878 267 Q945 265 950 242 V207 Z" fill="url(#tan)" />
      <path d="M805 207 Q820 180 878 179 Q940 181 950 207 Q940 229 878 230 Q815 228 805 207 Z" fill="url(#tanTop)" />

      {/* base and the two lower plates */}
      <g transform="translate(0 630)">
        <path d="M219 393 L380 300 L492 218 L525 256 Q545 270 600 270 L1135 262 L1215 218 L1454 256 L1457 357 L1010 614 L220 493 Z" fill={top} />
        <path d="M543 305 L700 285 L800 318 L545 353 Z" fill={light} />
        <path d="M355 412 L543 305 L545 353 L475 395 V430 L355 500 Z" fill={side} />
        <path d="M475 395 Q545 365 612 390 V418 Q540 405 475 430 Z" fill="url(#cyl)" />
        <path d="M612 390 L632 405 L612 418 Z" fill={front} />
        <path d="M545 353 L800 318 M475 395 L545 353" fill="none" />
        <path d="M1135 262 L1380 298 V385 L1180 355 L1060 302 Z" fill={front} />
        <path d="M1060 302 L1168 315 V345 L1030 330 Z" fill={top} />
        <path d="M1075 325 Q1120 312 1168 318 V345 Z" fill="url(#cyl)" />
        <path d="M219 393 L355 412 V500 L673 548 V512 L1010 562 V614 L220 493 Z" fill={front} />
        <path d="M1010 562 L1200 453 V489 L1380 385 V298 L1454 256 L1457 357 L1010 614 Z" fill={side} />
        <path d="M673 512 L720 483 L1010 525 L1150 445 L1200 453 L1010 562 Z" fill={top} />

        <path d="M602 422 L790 312 L1040 322 L1237 350 L1008 482 Z" fill={top} />
        <path d="M602 422 L1008 482 V525 L602 464 Z" fill={front} />
        <path d="M1008 482 L1237 350 V393 L1008 525 Z" fill={side} />
        <path d="M793 295 V320 Q805 340 853 340 Q905 338 915 318 V295 Z" fill="url(#cyl)" />

        <path d="M598 235 L785 125 L920 115 L1232 162 L1003 294 Z" fill={top} />
        <path d="M598 235 L1003 294 V335 L598 272 Z" fill={front} />
        <path d="M1003 294 L1232 162 V205 L1003 335 Z" fill={side} />
        <path d="M784 90 V130 Q795 151 852 152 Q910 150 920 130 V90 Z" fill="url(#cyl)" />
        <path d="M784 90 Q798 66 852 65 Q910 67 920 90 Q910 109 852 110 Q795 109 784 90 Z" fill="url(#head)" />

        <path
          d="M1001 682 V640 Q1005 628 1018 633 Q1030 640 1034 655 L1058 667 M1020 666 Q1040 690 1048 718 Q1055 740 1072 757 L1113 826"
          fill="none"
          stroke="#0078d9"
          strokeWidth="22"
          strokeLinecap="round"
        />
      </g>
    </svg>
  );
}

function OrientationCube() {
  const arrow = 'absolute flex h-6 w-6 items-center justify-center text-[#444]';
  return (
    <div className="absolute right-[10px] bottom-0 h-[220px] w-[220px]">
      <svg viewBox="150 330 620 430" className="absolute top-[22px] left-0 h-[143px] w-[207px] overflow-visible" role="img" aria-label="View orientation">
        <path d="M310 468 L420 404 L616 434 L622 648 L512 712 L314 682 Z" fill="#fff" fillOpacity="0.8" />
        <path d="M420 404 L425 617 L622 648 M425 617 L314 682" fill="none" stroke="#ccc" strokeWidth="3" strokeDasharray="12 10" />
        <path d="M310 468 L420 404 L616 434 L622 648 L512 712 L314 682 Z M310 468 L508 497 L616 434 M508 497 L512 712" fill="none" stroke="#a3a3a3" strokeWidth="4" />
        <g fill="#666" fontFamily="Lato, sans-serif">
          <text x="341" y="594" fontSize="34" transform="rotate(8 341 594)">BOTTOM</text>
          <text x="537" y="601" fontSize="24" transform="rotate(-27 537 601)">FRONT</text>
          <text x="500" y="446" fontSize="18" transform="rotate(184 500 446)">LEFT</text>
        </g>
        <g strokeWidth="4">
          <path d="M515 730 L225 686" stroke="#ff7373" />
          <path d="M212 685 L252 684 L251 696 Z" fill="#f66" />
          <path d="M515 728 L508 410" stroke="#73f573" />
          <path d="M507 396 L501 440 L515 440 Z" fill="#66f266" />
          <path d="M515 730 L680 635" stroke="#8080ff" />
          <path d="M688 630 L659 641 L665 651 Z" fill="#7373ff" />
        </g>
        <g fontFamily="Open Sans, sans-serif" fontSize="58">
          <text x="163" y="691" fill="#ff4d4d">x</text>
          <text x="490" y="370" fill="#4dff4d">y</text>
          <text x="691" y="633" fill="#4d4dff">z</text>
        </g>
      </svg>
      <button aria-label="Rotate up" className={`${arrow} top-[-10px] left-[95px]`}>
        <ChevronUp size={22} strokeWidth={1.5} />
      </button>
      <button aria-label="Rotate down" className={`${arrow} bottom-[18px] left-[95px]`}>
        <ChevronDown size={22} strokeWidth={1.5} />
      </button>
      <button aria-label="Rotate left" className={`${arrow} top-[84px] left-0`}>
        <ChevronLeft size={22} strokeWidth={1.5} />
      </button>
      <button aria-label="Rotate right" className={`${arrow} top-[84px] right-[6px]`}>
        <ChevronRight size={22} strokeWidth={1.5} />
      </button>
      <button aria-label="Home view" className={`${arrow} top-[23px] right-[39px]`}>
        <House size={17} strokeWidth={1.4} />
      </button>
      <button aria-label="Roll left" className={`${arrow} bottom-[47px] left-[29px]`}>
        <svg viewBox="0 0 18 18" className="h-[18px] w-[18px]" fill="none" stroke="#888" strokeWidth="1.3">
          <path d="M10 2 A7.500 7.500 0 1 1 3 11" />
          <path d="M1 6 L0 11 L5 10 Z" fill="#444" stroke="none" />
        </svg>
      </button>
      <button aria-label="Roll right" className={`${arrow} right-[39px] bottom-[47px]`}>
        <svg viewBox="0 0 18 18" className="h-[18px] w-[18px]" fill="none" stroke="#888" strokeWidth="1.3">
          <path d="M8 2 A7.500 7.500 0 1 0 15 11" />
          <path d="M17 6 L18 11 L13 10 Z" fill="#444" stroke="none" />
        </svg>
      </button>
    </div>
  );
}

function GeometryPanel() {
  return (
    <section className="w-[295px] shrink-0 self-start border border-[#e2e2e2] bg-white text-[#333] shadow-[0_0_30px_rgba(0,0,0,0.07)]">
      <div className="flex h-11 items-center pl-[7px]">
        <button aria-label="Collapse geometry" className="flex w-[30px] justify-center text-[#666]">
          <ChevronDown size={20} strokeWidth={1.4} />
        </button>
        <h2 className="pl-[3px] font-bold">GEOMETRY</h2>
      </div>
      <div className="flex h-[35px] items-center pl-[7px]">
        <Guide type="root" />
        <span className="pl-[3px] font-bold text-[#444]">Drone_Arm_Assembly</span>
      </div>
      <ul className="pb-[11px]">
        {PARTS.map((part, i) => (
          <li key={part} className="flex h-[35px] items-center pl-[37px]">
            <Guide type={i === PARTS.length - 1 ? 'end' : 'tee'} />
            <svg viewBox="0 0 30 30" className="h-[30px] w-[30px]" aria-hidden="true">
              <Cube x={14.5} y={15} r={9} top="#e9e9e9" left="#8f8f8e" right="#c6c7c8" />
            </svg>
            <span className="pl-[3px]">{part}</span>
          </li>
        ))}
      </ul>
      <h2 className="flex h-[45px] items-center border-t border-[#e2e2e2] pl-[10px] font-bold text-[#a0a0a0]">
        SAVED SELECTIONS
      </h2>
      <div className="flex h-[45px] items-center border-t border-[#e2e2e2] pl-[10px] pr-[15px]">
        <h2 className="font-bold">GEOMETRY PRIMITIVES</h2>
        <AddButton label="geometry primitive" />
      </div>
    </section>
  );
}

function Grip({ className }) {
  return (
    <div className={`flex w-[10px] justify-center gap-[2px] ${className}`} aria-hidden="true">
      <span className="h-5 w-[2px] bg-[#dcdcdc]" />
      <span className="h-5 w-[2px] bg-[#dcdcdc]" />
    </div>
  );
}

export default function App() {
  return (
    <div className="flex h-screen flex-col overflow-hidden bg-[#f5f5f5] font-['Lato',sans-serif] text-[16px] leading-5 text-[#333]">
      <div className="font-['Noto_Sans',sans-serif] text-[14px]">
        <BrowserTabs />
        <AddressBar />
      </div>
      <AppHeader />

      <main className="relative flex min-h-0 flex-1 p-[10px]">
        <AssemblyModel />

        <aside className="relative flex w-[308px] shrink-0 flex-col gap-[6px]">
          <SimulationTree />
          <h2 className="flex h-11 items-center border border-[#e2e2e2] bg-white pl-[13px] text-[19px] font-bold text-[#3c3c3c] shadow-[0_0_30px_rgba(0,0,0,0.07)]">
            Job status
          </h2>
        </aside>
        <Grip className="self-center" />

        <div className="relative flex min-w-0 flex-1 items-start">
          <BoundaryForm />
          <div className="flex min-w-0 flex-1 justify-center pt-[5px] pl-[10px]">
            <ViewerToolbar />
          </div>
          <Grip className="mt-[168px]" />
          <GeometryPanel />
        </div>

        <div className="absolute bottom-[2px] left-1/2 flex w-[172px] -translate-x-1/2 flex-col items-center gap-[7px]">
          <span className="h-[5px] w-full border-2 border-t-0 border-[#444]" />
          <span className="text-[#555]">0.02 m</span>
        </div>

        <OrientationCube />
        <button
          aria-label="Open chat"
          className="absolute right-[25px] bottom-[230px] flex h-[60px] w-[60px] items-center justify-center rounded-full bg-[#0077a7] shadow-[0_2px_24px_rgba(0,0,0,0.15)]"
        >
          <svg viewBox="0 0 28 32" className="h-8 w-7">
            <path d="M4 1 H24 Q27 1 27 4 V31 L20 28 H4 Q1 28 1 25 V4 Q1 1 4 1 Z" fill="#fff" />
            <path d="M5 20 Q14 26.500 23 20" fill="none" stroke="#0077a7" strokeWidth="1.6" strokeLinecap="round" />
          </svg>
        </button>
      </main>
    </div>
  );
}
